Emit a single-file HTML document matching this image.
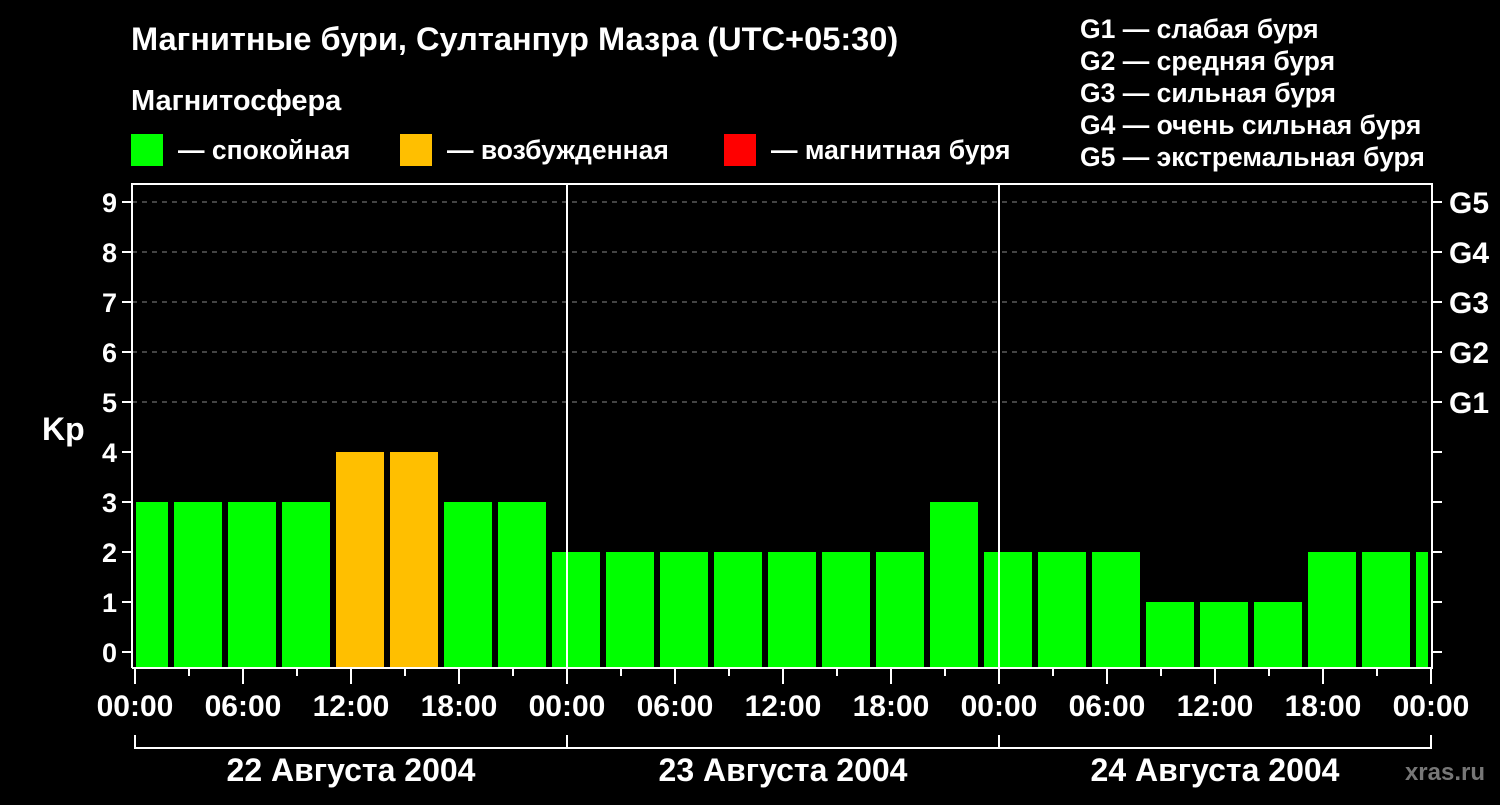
<!DOCTYPE html><html><head><meta charset="utf-8"><style>
body{margin:0;background:#000;width:1500px;height:800px;overflow:hidden}
svg text{font-family:"Liberation Sans",sans-serif;font-weight:bold;fill:#fff}
</style></head><body>
<svg width="1500" height="800" xmlns="http://www.w3.org/2000/svg">
<text x="131" y="50" font-size="32.6">Магнитные бури, Султанпур Мазра (UTC+05:30)</text>
<text x="131" y="110" font-size="29">Магнитосфера</text>
<rect x="131" y="134" width="32" height="32" fill="#00ff00"/><text x="178" y="159" font-size="26.5">— спокойная</text>
<rect x="400" y="134" width="32" height="32" fill="#ffbf00"/><text x="447" y="159" font-size="26.5">— возбужденная</text>
<rect x="724" y="134" width="32" height="32" fill="#ff0000"/><text x="771" y="159" font-size="26.5">— магнитная буря</text>
<g font-size="26.5"><text x="1080" y="38">G1 — слабая буря</text><text x="1080" y="70">G2 — средняя буря</text><text x="1080" y="102">G3 — сильная буря</text><text x="1080" y="134">G4 — очень сильная буря</text><text x="1080" y="166">G5 — экстремальная буря</text></g>
<g stroke="#888" stroke-dasharray="5,5" stroke-width="1">
<line x1="132" x2="1432" y1="202" y2="202"/><line x1="132" x2="1432" y1="252" y2="252"/><line x1="132" x2="1432" y1="302" y2="302"/><line x1="132" x2="1432" y1="352" y2="352"/><line x1="132" x2="1432" y1="402" y2="402"/></g>
<g fill="#00ff00">
<rect x="136" y="502" width="32" height="166"/><rect x="174" y="502" width="48" height="166"/><rect x="228" y="502" width="48" height="166"/><rect x="282" y="502" width="48" height="166"/>
<rect x="336" y="452" width="48" height="216" fill="#ffbf00"/><rect x="390" y="452" width="48" height="216" fill="#ffbf00"/>
<rect x="444" y="502" width="48" height="166"/><rect x="498" y="502" width="48" height="166"/>
<rect x="552" y="552" width="48" height="116"/><rect x="606" y="552" width="48" height="116"/><rect x="660" y="552" width="48" height="116"/><rect x="714" y="552" width="48" height="116"/><rect x="768" y="552" width="48" height="116"/><rect x="822" y="552" width="48" height="116"/><rect x="876" y="552" width="48" height="116"/>
<rect x="930" y="502" width="48" height="166"/>
<rect x="984" y="552" width="48" height="116"/><rect x="1038" y="552" width="48" height="116"/><rect x="1092" y="552" width="48" height="116"/>
<rect x="1146" y="602" width="48" height="66"/><rect x="1200" y="602" width="48" height="66"/><rect x="1254" y="602" width="48" height="66"/>
<rect x="1308" y="552" width="48" height="116"/><rect x="1362" y="552" width="48" height="116"/><rect x="1416" y="552" width="12" height="116"/>
</g>
<g stroke="#fff" stroke-width="2" fill="none">
<path d="M132 668V184H1432V668H132"/>
<line x1="567" y1="184" x2="567" y2="668"/><line x1="999" y1="184" x2="999" y2="668"/>
<path d="M122 202h10M122 252h10M122 302h10M122 352h10M122 402h10M122 452h10M122 502h10M122 552h10M122 602h10M122 652h10"/>
<path d="M1432 202h10M1432 252h10M1432 302h10M1432 352h10M1432 402h10M1432 452h10M1432 502h10M1432 552h10M1432 602h10M1432 652h10"/>
<path d="M135 668v16M189 668v8M243 668v16M297 668v8M351 668v16M405 668v8M459 668v16M513 668v8M567 668v16M621 668v8M675 668v16M729 668v8M783 668v16M837 668v8M891 668v16M945 668v8M999 668v16M1053 668v8M1107 668v16M1161 668v8M1215 668v16M1269 668v8M1323 668v16M1377 668v8M1431 668v16"/>
<path d="M135 735v13H1431V735M567 735v13M999 735v13"/>
</g>
<g font-size="27" text-anchor="end"><text x="117" y="212">9</text><text x="117" y="262">8</text><text x="117" y="312">7</text><text x="117" y="362">6</text><text x="117" y="412">5</text><text x="117" y="462">4</text><text x="117" y="512">3</text><text x="117" y="562">2</text><text x="117" y="612">1</text><text x="117" y="662">0</text></g>
<text x="42" y="440" font-size="32">Kp</text>
<g font-size="30"><text x="1449" y="213">G5</text><text x="1449" y="263">G4</text><text x="1449" y="313">G3</text><text x="1449" y="363">G2</text><text x="1449" y="413">G1</text></g>
<g font-size="30" text-anchor="middle"><text x="135" y="716">00:00</text><text x="243" y="716">06:00</text><text x="351" y="716">12:00</text><text x="459" y="716">18:00</text><text x="567" y="716">00:00</text><text x="675" y="716">06:00</text><text x="783" y="716">12:00</text><text x="891" y="716">18:00</text><text x="999" y="716">00:00</text><text x="1107" y="716">06:00</text><text x="1215" y="716">12:00</text><text x="1323" y="716">18:00</text><text x="1431" y="716">00:00</text>
<text x="351" y="781" font-size="32">22 Августа 2004</text><text x="783" y="781" font-size="32">23 Августа 2004</text><text x="1215" y="781" font-size="32">24 Августа 2004</text></g>
<text x="1485" y="780" font-size="24" text-anchor="end" style="fill:#777">xras.ru</text>
</svg></body></html>
